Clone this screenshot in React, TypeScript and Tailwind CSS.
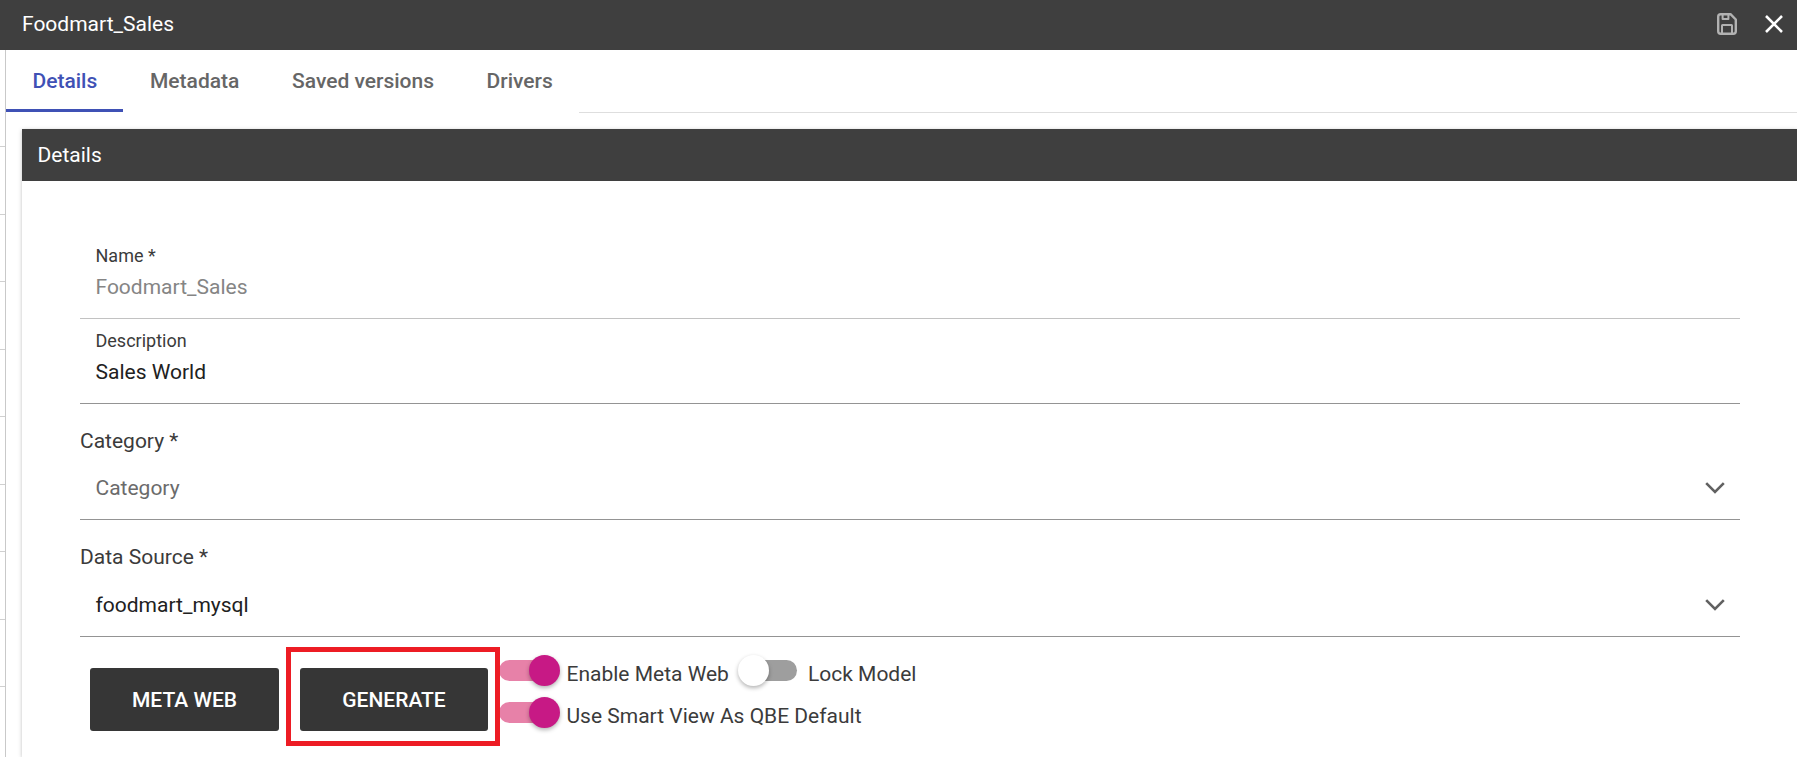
import { useState } from 'react';

const TABS = ['Details', 'Metadata', 'Saved versions', 'Drivers'];
const TAB_STYLES = ['w-[117px] pl-[26.5px]', 'w-[142px] pl-[27px]', 'w-[194px] pl-[27px]', 'w-[120px] pl-[27.5px]'];

function SaveIcon() {
    return (
        <svg width="20" height="22" viewBox="0 0 20 22" fill="none" stroke="#b2b2b2" strokeWidth="2.4" strokeLinejoin="round">
            <path d="M3.7 1.2H13.5L18.8 6.5V18.3Q18.8 20.8 16.3 20.8H3.7Q1.2 20.8 1.2 18.3V3.7Q1.2 1.2 3.7 1.2Z" />
            <path d="M5.6 1V6H11.4V1" strokeWidth="2" />
            <path d="M5 21V12.5Q5 12 5.5 12H14.5Q15 12 15 12.5V21" strokeWidth="2" />
        </svg>
    );
}

function CloseIcon() {
    return (
        <svg width="18" height="18" viewBox="0 0 18 18" fill="none" stroke="#fff" strokeWidth="2.6">
            <path d="M1 1L17 17M17 1L1 17" />
        </svg>
    );
}

function ChevronIcon() {
    return (
        <svg width="20" height="12" viewBox="0 0 20 12" fill="none" stroke="#616161" strokeWidth="2.6">
            <path d="M1.2 1.2L10 10L18.8 1.2" />
        </svg>
    );
}

interface SelectProps {
    label: string;
    value: string;
    placeholder?: boolean;
}

function SelectField({ label, value, placeholder }: SelectProps) {
    return (
        <div className={`border-b border-[#949494] ${placeholder ? 'h-[116px]' : 'h-[117px]'}`}>
            <div className="pt-[25px] leading-6 text-[#3b3b3b]">{label}</div>
            <div className={`flex items-center justify-between pl-[15.5px] pr-[15px] leading-6 ${placeholder ? 'pt-[23px]' : 'pt-6'}`}>
                <span className={placeholder ? 'text-[#6b6b6b]' : 'text-[#212121]'}>{value}</span>
                <ChevronIcon />
            </div>
        </div>
    );
}

interface ToggleProps {
    label: string;
    on: boolean;
    onChange: () => void;
}

function Toggle({ label, on, onChange }: ToggleProps) {
    return (
        <button type="button" onClick={onChange} className="flex h-[42px] items-start whitespace-nowrap">
            <span className={`relative mt-[5px] block h-[21px] w-[54px] rounded-full ${on ? 'bg-[#e781a8]' : 'bg-[#9e9e9e]'}`}>
                <span
                    className={`absolute -top-[5px] block size-[31px] rounded-full shadow-[0_2px_4px_rgba(0,0,0,0.3)] ${
                        on ? 'left-[29.5px] bg-[#c71985]' : '-left-[5px] bg-white'
                    }`}
                />
            </span>
            <span className={`pt-[7px] leading-6 text-[#3b3b3b] ${on ? 'pl-[13.5px]' : 'pl-[10.5px]'}`}>{label}</span>
        </button>
    );
}

export default function App() {
    const [tab, setTab] = useState(0);
    const [metaWeb, setMetaWeb] = useState(true);
    const [locked, setLocked] = useState(false);
    const [smartView, setSmartView] = useState(true);

    return (
        <div className="flex h-[757px] w-[1797px] flex-col overflow-hidden bg-white font-['Roboto',sans-serif] text-[21px]">
            {/* Title bar */}
            <header className="flex h-[50px] shrink-0 items-center justify-between bg-[#3f3f3f] pl-[22px] pr-[14px] text-white">
                <h1>Foodmart_Sales</h1>
                <div className="flex items-center gap-[28px] pb-[2px]">
                    <SaveIcon />
                    <CloseIcon />
                </div>
            </header>

            <div className="flex min-h-0 flex-1">
                {/* Edge of the list behind the detail panel */}
                <div className="w-[6px] shrink-0 border-r border-[#c9c9c9] pt-[29px]">
                    {Array.from({ length: 9 }, (_, i) => (
                        <div key={i} className="h-[67.5px] pt-[67px]">
                            <div className="h-px bg-[#d0d0d0]" />
                        </div>
                    ))}
                </div>

                <main className="flex min-w-0 flex-1 flex-col">
                    <nav className="flex h-[63px] shrink-0">
                        {TABS.map((name, i) => (
                            <button
                                key={name}
                                type="button"
                                onClick={() => setTab(i)}
                                className={`h-[62px] border-b-3 pt-[5px] text-left font-medium whitespace-nowrap ${TAB_STYLES[i]} ${
                                    tab === i ? 'border-[#3f51b5] text-[#3f51b5]' : 'border-transparent text-[#666]'
                                }`}
                            >
                                {name}
                            </button>
                        ))}
                        <div className="flex-1 border-b border-[#dedede]" />
                    </nav>

                    <section className="mt-4 ml-4 flex-1 shadow-[0_1px_4px_rgba(0,0,0,0.25)]">
                        <h2 className="flex h-[52px] items-center bg-[#3f3f3f] pt-[2px] pl-[15.5px] text-white">Details</h2>

                        <div className="pt-[52px] pl-[58px] pr-[57px]">
                            <div className="h-[86px] border-b border-[#c2c2c2] pl-[15.5px]">
                                <div className="pt-[13px] text-[18px] leading-5 text-[#3b3b3b]">Name *</div>
                                <div className="pt-[9px] leading-6 text-[#858585]">Foodmart_Sales</div>
                            </div>
                            <div className="h-[85px] border-b border-[#949494] pl-[15.5px]">
                                <div className="pt-[12px] text-[18px] leading-5 text-[#3b3b3b]">Description</div>
                                <div className="pt-[9px] leading-6 text-[#212121]">Sales World</div>
                            </div>
                            <SelectField label="Category *" value="Category" placeholder />
                            <SelectField label="Data Source *" value="foodmart_mysql" />

                            <div className="flex pt-[10px] pl-[10px]">
                                <button type="button" className="mt-[21px] h-[63px] w-[189px] rounded-[3px] bg-[#363636] pt-[2px] font-medium text-white">
                                    META WEB
                                </button>
                                <div className="z-10 ml-[7px] h-[99px] w-[214px] border-5 border-[#ed1c24] pt-4 pl-[9px]">
                                    <button type="button" className="h-[63px] w-[188px] rounded-[3px] bg-[#363636] pt-[2px] font-medium text-white">
                                        GENERATE
                                    </button>
                                </div>
                                <div className="-ml-[1px] pt-[8px]">
                                    <div className="flex">
                                        <Toggle label="Enable Meta Web" on={metaWeb} onChange={() => setMetaWeb(!metaWeb)} />
                                        <div className="ml-[14.5px]">
                                            <Toggle label="Lock Model" on={locked} onChange={() => setLocked(!locked)} />
                                        </div>
                                    </div>
                                    <Toggle label="Use Smart View As QBE Default" on={smartView} onChange={() => setSmartView(!smartView)} />
                                </div>
                            </div>
                        </div>
                    </section>
                </main>
            </div>
        </div>
    );
}
